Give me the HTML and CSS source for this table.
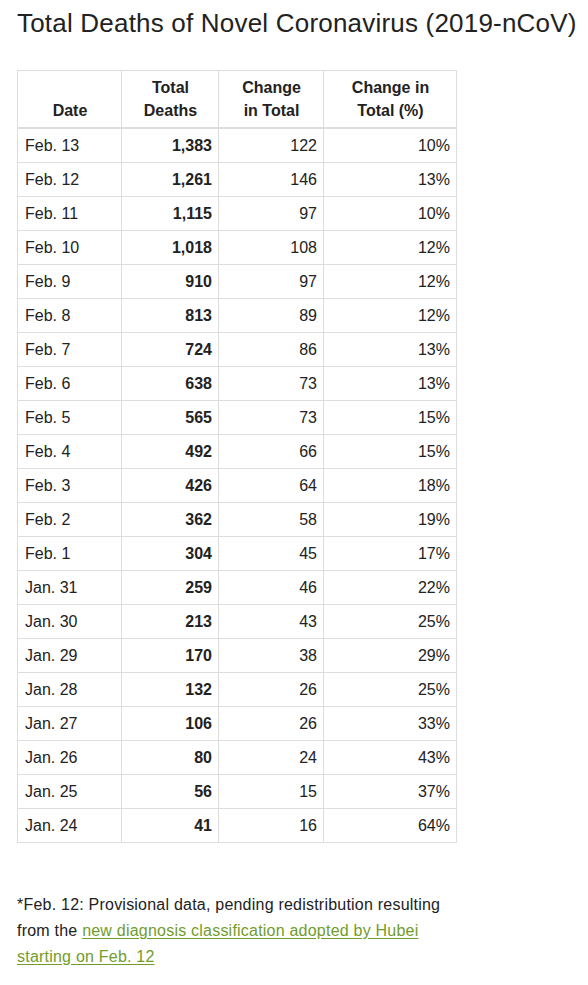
FILE: index.html
```html
<!DOCTYPE html>
<html>
<head>
<meta charset="utf-8">
<link rel="stylesheet" href="styles.css">
</head>
<body>
<div class="page">
<h1 class="title">Total Deaths of Novel Coronavirus (2019-nCoV)</h1>
<table class="data">
<colgroup><col class="c1"><col class="c2"><col class="c3"><col class="c4"></colgroup>
<thead>
<tr><th class="date">Date</th><th>Total<br>Deaths</th><th>Change<br>in Total</th><th>Change in<br>Total (%)</th></tr>
</thead>
<tbody>
<tr><td>Feb. 13</td><td class="num b">1,383</td><td class="num">122</td><td class="num">10%</td></tr>
<tr><td>Feb. 12</td><td class="num b">1,261</td><td class="num">146</td><td class="num">13%</td></tr>
<tr><td>Feb. 11</td><td class="num b">1,115</td><td class="num">97</td><td class="num">10%</td></tr>
<tr><td>Feb. 10</td><td class="num b">1,018</td><td class="num">108</td><td class="num">12%</td></tr>
<tr><td>Feb. 9</td><td class="num b">910</td><td class="num">97</td><td class="num">12%</td></tr>
<tr><td>Feb. 8</td><td class="num b">813</td><td class="num">89</td><td class="num">12%</td></tr>
<tr><td>Feb. 7</td><td class="num b">724</td><td class="num">86</td><td class="num">13%</td></tr>
<tr><td>Feb. 6</td><td class="num b">638</td><td class="num">73</td><td class="num">13%</td></tr>
<tr><td>Feb. 5</td><td class="num b">565</td><td class="num">73</td><td class="num">15%</td></tr>
<tr><td>Feb. 4</td><td class="num b">492</td><td class="num">66</td><td class="num">15%</td></tr>
<tr><td>Feb. 3</td><td class="num b">426</td><td class="num">64</td><td class="num">18%</td></tr>
<tr><td>Feb. 2</td><td class="num b">362</td><td class="num">58</td><td class="num">19%</td></tr>
<tr><td>Feb. 1</td><td class="num b">304</td><td class="num">45</td><td class="num">17%</td></tr>
<tr><td>Jan. 31</td><td class="num b">259</td><td class="num">46</td><td class="num">22%</td></tr>
<tr><td>Jan. 30</td><td class="num b">213</td><td class="num">43</td><td class="num">25%</td></tr>
<tr><td>Jan. 29</td><td class="num b">170</td><td class="num">38</td><td class="num">29%</td></tr>
<tr><td>Jan. 28</td><td class="num b">132</td><td class="num">26</td><td class="num">25%</td></tr>
<tr><td>Jan. 27</td><td class="num b">106</td><td class="num">26</td><td class="num">33%</td></tr>
<tr><td>Jan. 26</td><td class="num b">80</td><td class="num">24</td><td class="num">43%</td></tr>
<tr><td>Jan. 25</td><td class="num b">56</td><td class="num">15</td><td class="num">37%</td></tr>
<tr><td>Jan. 24</td><td class="num b">41</td><td class="num">16</td><td class="num">64%</td></tr>
</tbody>
</table>
<p class="note">*Feb. 12: Provisional data, pending redistribution resulting from the <a href="#" class="link">new diagnosis classification adopted by Hubei starting on Feb. 12</a></p>
</div>
</body>
</html>
```

FILE: styles.css
```css
html, body {
  margin: 0;
  padding: 0;
  background: #fff;
}
.page {
  padding: 8px 17px 0 17px;
  font-family: "Liberation Sans", Arial, sans-serif;
  color: #222;
}
.title {
  margin: 0;
  font-size: 26px;
  line-height: 30px;
  font-weight: normal;
  letter-spacing: 0.2px;
  color: #222;
  white-space: nowrap;
}
.data {
  margin-top: 32px;
  border-collapse: collapse;
  table-layout: fixed;
  width: 439px;
  font-size: 16px;
}
.c1 { width: 104px; }
.c2 { width: 97px; }
.c3 { width: 105px; }
.c4 { width: 133px; }
.data th, .data td {
  border: 1px solid #ddd;
  padding: 5px 6px 5px 7px;
  line-height: 23px;
}
.data th {
  font-weight: bold;
  text-align: center;
  vertical-align: bottom;
  border-bottom: 2px solid #ddd;
}
.data td {
  text-align: left;
}
.data td.num {
  text-align: right;
}
.data td.b {
  font-weight: bold;
}
.note {
  margin: 49px 0 0 0;
  width: 440px;
  font-size: 16px;
  line-height: 26px;
  letter-spacing: 0.22px;
  color: #222;
}
.link {
  color: #719c2b;
  text-decoration: underline;
  text-underline-offset: 2px;
}
```
